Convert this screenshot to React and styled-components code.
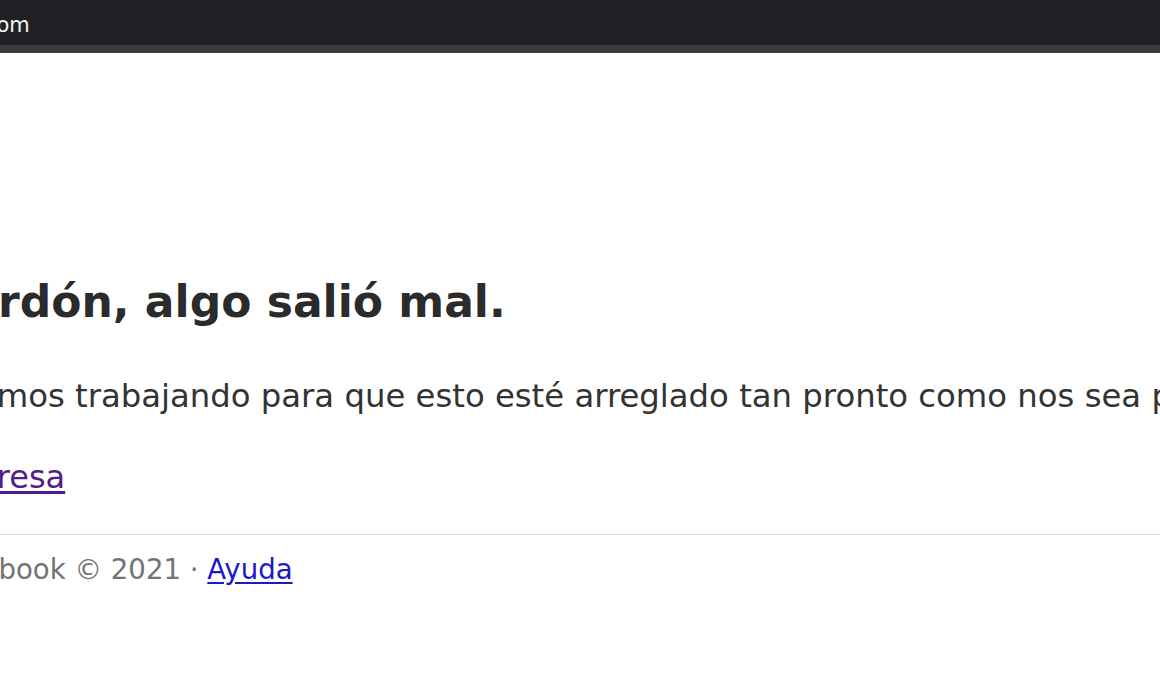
import React from "react";
import styled, { createGlobalStyle } from "styled-components";

const Global = createGlobalStyle`
  html, body {
    margin: 0;
    padding: 0;
    background: #ffffff;
    overflow: hidden;
    width: 100%;
    height: 100%;
  }
  body {
    font-family: "DejaVu Sans", Verdana, sans-serif;
  }
`;

const Page = styled.div`
  width: 1160px;
  height: 700px;
  overflow: hidden;
  background: #ffffff;
  display: flex;
  flex-direction: column;
`;

const TopBar = styled.div`
  height: 45px;
  background: #202124;
  border-bottom: 8px solid #3a3b3d;
  display: flex;
  align-items: center;
  overflow: hidden;
  flex-shrink: 0;
`;

const Address = styled.span`
  margin-left: -174px;
  color: #f4f4f4;
  font-family: "DejaVu Sans", Verdana, sans-serif;
  font-size: 21px;
  line-height: 24px;
  white-space: nowrap;
  padding-top: 4px;
`;

const Content = styled.main`
  margin-left: -64px;
  padding-top: 223px;
  display: flex;
  flex-direction: column;
  white-space: nowrap;
`;

const Heading = styled.h1`
  margin: 0;
  font-family: "DejaVu Sans", Verdana, sans-serif;
  font-weight: bold;
  font-size: 44px;
  line-height: 52px;
  color: #2b2b2b;
`;

const Message = styled.p`
  margin: 48px 0 0 -9px;
  font-size: 32.3px;
  line-height: 40px;
  color: #333333;
`;

const BackRow = styled.div`
  margin-top: 41px;
  font-size: 32px;
  line-height: 40px;
`;

const Link = styled.a`
  color: ${(p) => (p.$visited ? "#551a8b" : "#1a1ac8")};
  text-decoration: underline;
  text-underline-offset: 3px;
  cursor: pointer;
`;

const Rule = styled.hr`
  margin: 37px 0 0;
  border: 0;
  border-top: 1px solid #d9d9d9;
  width: calc(100% + 64px);
`;

const Footer = styled.footer`
  margin-top: 18px;
  font-size: 27.6px;
  line-height: 34px;
  color: #737373;
`;

export default function App() {
  return (
    <>
      <Global />
      <Page>
        <TopBar>
          <Address>www.facebook.com</Address>
        </TopBar>
        <Content>
          <Heading>Perdón, algo salió mal.</Heading>
          <Message>
            Estamos trabajando para que esto esté arreglado tan pronto como nos sea posible.
          </Message>
          <BackRow>
            <Link $visited href="#">Regresa</Link>
          </BackRow>
          <Rule />
          <Footer>
            Facebook © 2021 · <Link href="#">Ayuda</Link>
          </Footer>
        </Content>
      </Page>
    </>
  );
}
